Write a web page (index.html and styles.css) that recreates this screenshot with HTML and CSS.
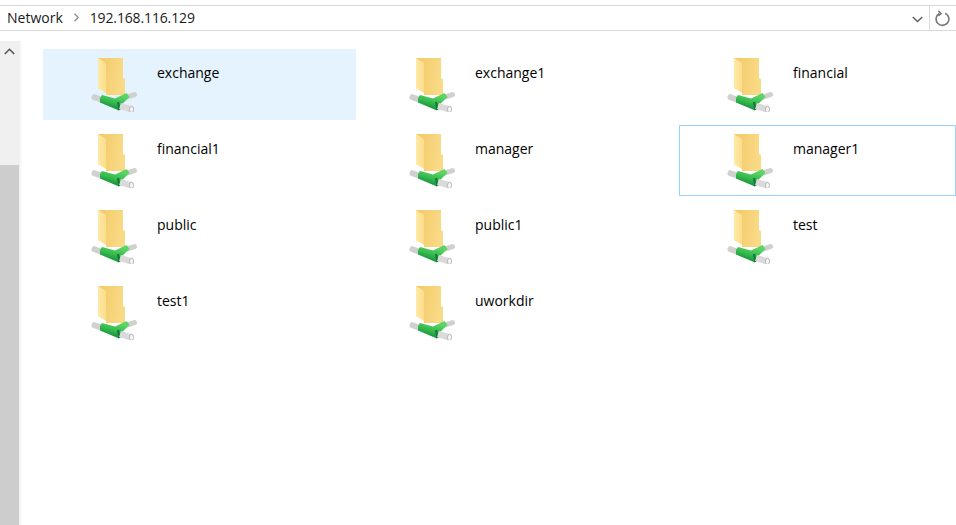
FILE: index.html
```html
<!DOCTYPE html>

<html>
    <head>
        <meta charset="UTF-8">
        <title>192.168.116.129</title>

        <link rel="stylesheet" href="styles.css">
    </head>

    <body>
        <svg class="defs" width="0" height="0">
            <defs>
                <linearGradient id="folderBack" x1="0" y1="0" x2="1" y2="0.2">
                    <stop offset="0" stop-color="#f2c966"/>
                    <stop offset="1" stop-color="#f9da86"/>
                </linearGradient>
                <linearGradient id="folderFront" x1="0" y1="0" x2="1" y2="0">
                    <stop offset="0" stop-color="#ffeaa6"/>
                    <stop offset="1" stop-color="#fcdc8c"/>
                </linearGradient>
                <linearGradient id="pipe" gradientUnits="userSpaceOnUse" x1="24" y1="38" x2="20" y2="52">
                    <stop offset="0" stop-color="#5cd466"/>
                    <stop offset="0.55" stop-color="#36bb4e"/>
                    <stop offset="1" stop-color="#17903e"/>
                </linearGradient>
                <symbol id="shareIcon" viewBox="0 0 48 56">
                    <path d="M8 2 H33 V22 L35 23 V39 H16 V36 L8 32 Z" fill="url(#folderBack)"/>
                    <path d="M8 2 L16 7 V37 L8 32 Z" fill="url(#folderFront)"/>
                    <path d="M4.5 41.2 L12 44" stroke="#cfd1cf" stroke-width="6" stroke-linecap="round"/>
                    <path d="M37 41 L44.5 38.6" stroke="#cfd1cf" stroke-width="5" stroke-linecap="round"/>
                    <path d="M12 39 L25 42.5 L36.5 37 L39.5 41 L30 50 L29 54.5 L10 46.5 L10 42 Z" fill="url(#pipe)"/>
                    <path d="M28 46 L29.5 54" stroke="#12793a" stroke-width="2.2"/>
                    <path d="M30 50 L41 53.3" stroke="#dadada" stroke-width="6.4"/>
                    <ellipse cx="41.5" cy="53.4" rx="2" ry="3.2" fill="#f6f6f6" stroke="#b5b5b5"/>
                </symbol>
            </defs>
        </svg>

        <div class="address-bar">
            <div class="crumbs">
                <span>Network</span>
                <svg class="crumb-arrow" width="7" height="9" viewBox="0 0 7 9">
                    <path d="M1.5 .8 L5.3 4.5 L1.5 8.2" fill="none" stroke="#8a8a8a" stroke-width="1.2"/>
                </svg>
                <span class="crumb-ip">192.168.116.129</span>
            </div>
            <div class="address-dropdown">
                <svg width="11" height="7" viewBox="0 0 11 7">
                    <path d="M.7 .9 L5.5 5.5 L10.3 .9" fill="none" stroke="#5f5f5f" stroke-width="1.4"/>
                </svg>
            </div>
            <div class="address-refresh">
                <svg width="16" height="17" viewBox="0 0 16 17">
                    <path d="M10.2 3.2 A6.4 6.4 0 1 1 4.4 3.4" fill="none" stroke="#777" stroke-width="1.6"/>
                    <path d="M3.4 .8 L6 3.6 L3.2 5.9" fill="none" stroke="#777" stroke-width="1.6"/>
                </svg>
            </div>
        </div>

        <div class="main">
            <div class="scrollbar">
                <div class="scroll-up">
                    <svg width="11" height="7" viewBox="0 0 11 7">
                        <path d="M.8 6 L5.5 1.3 L10.2 6" fill="none" stroke="#555" stroke-width="1.6"/>
                    </svg>
                </div>
                <div class="scroll-track"></div>
                <div class="scroll-thumb"></div>
            </div>

            <div class="grid">
                <div class="item selected"><svg class="icon"><use href="#shareIcon"/></svg><span class="name">exchange</span></div>
                <div class="item"><svg class="icon"><use href="#shareIcon"/></svg><span class="name">exchange1</span></div>
                <div class="item"><svg class="icon"><use href="#shareIcon"/></svg><span class="name">financial</span></div>
                <div class="item"><svg class="icon"><use href="#shareIcon"/></svg><span class="name">financial1</span></div>
                <div class="item"><svg class="icon"><use href="#shareIcon"/></svg><span class="name">manager</span></div>
                <div class="item focused"><svg class="icon"><use href="#shareIcon"/></svg><span class="name">manager1</span></div>
                <div class="item"><svg class="icon"><use href="#shareIcon"/></svg><span class="name">public</span></div>
                <div class="item"><svg class="icon"><use href="#shareIcon"/></svg><span class="name">public1</span></div>
                <div class="item"><svg class="icon"><use href="#shareIcon"/></svg><span class="name">test</span></div>
                <div class="item"><svg class="icon"><use href="#shareIcon"/></svg><span class="name">test1</span></div>
                <div class="item"><svg class="icon"><use href="#shareIcon"/></svg><span class="name">uworkdir</span></div>
            </div>
        </div>
    </body>
</html>
```

FILE: styles.css
```css
* {
    margin: 0;
    padding: 0;
    box-sizing: border-box;
}

html, body {
    width: 100%;
    height: 100%;
    overflow: hidden;
    background-color: #fff;
    font-family: "Open Sans", "Liberation Sans", sans-serif;
    font-size: 14px;
    color: #000;
}

.defs {
    display: block;
    height: 0;
}

.address-bar {
    display: flex;
    align-items: stretch;
    height: 26px;
    margin-top: 5px;
    border-top: 1px solid #d9d9d9;
    border-bottom: 1px solid #d9d9d9;
}

.crumbs {
    flex: 1;
    display: flex;
    align-items: center;
    gap: 10px;
    padding-left: 7px;
    padding-bottom: 1px;
    color: #1a1a1a;
}

.crumb-ip {
    letter-spacing: -0.14px;
}

.address-dropdown {
    width: 24px;
    display: flex;
    align-items: center;
    justify-content: center;
    padding: 2px 0 0 1px;
}

.address-refresh {
    width: 27px;
    display: flex;
    align-items: center;
    justify-content: center;
    padding-top: 1px;
    border-left: 1px solid #d9d9d9;
}

.main {
    display: flex;
    padding-top: 10px;
    height: 494px;
}

.scrollbar {
    width: 20px;
    flex: none;
    display: flex;
    flex-direction: column;
    border-right: 1px solid #f0f0f0;
    background-color: #f0f0f0;
    box-shadow: 2px 0 0 #f8f8f8;
    margin-right: 23px;
}

.scroll-up {
    height: 20px;
    display: flex;
    align-items: center;
    justify-content: center;
}

.scroll-track {
    height: 104px;
}

.scroll-thumb {
    flex: 1;
    background-color: #cdcdcd;
}

.grid {
    flex: 1;
    display: grid;
    grid-template-columns: 318px 318px 277px;
    grid-auto-rows: 71px;
    row-gap: 5px;
    align-content: start;
    padding-top: 8px;
}

.item {
    display: flex;
    align-items: flex-start;
    width: 313px;
    padding: 7px 0 0 47px;
}

.selected {
    background-color: #e5f3ff;
}

.focused {
    border: 1px solid #99d1ff;
    width: 277px;
    padding: 6px 0 0 46px;
}

.icon {
    width: 48px;
    height: 56px;
    flex: none;
}

.name {
    margin-left: 19px;
    margin-top: 7px;
    line-height: 20px;
}
```
